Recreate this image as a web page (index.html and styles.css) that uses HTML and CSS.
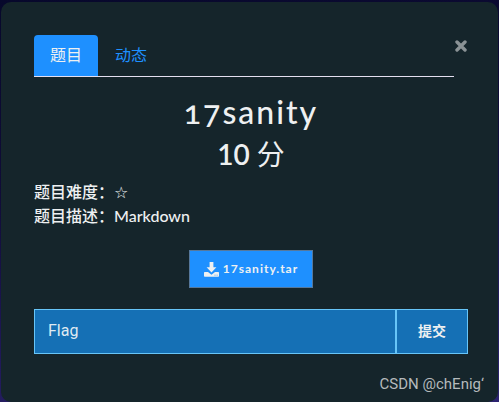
FILE: index.html
```html
<!DOCTYPE html>
<html lang="zh-CN">
<head>
<meta charset="utf-8">
<meta name="viewport" content="width=device-width, initial-scale=1">
<title>17sanity</title>
<link rel="stylesheet" href="styles.css">
</head>
<body>
<main class="modal">
  <header class="modal-head">
    <nav class="tabs">
      <a class="tab active" href="#challenge">题目</a>
      <a class="tab" href="#activity">动态</a>
    </nav>
    <button class="close" type="button" aria-label="关闭">
      <svg viewBox="0 0 12 12" width="12" height="12"><path d="M2 2L10 10M10 2L2 10" fill="none" stroke="currentColor" stroke-width="3.4" stroke-linecap="round"/></svg>
    </button>
  </header>
  <section id="challenge">
    <h2 class="name">17sanity</h2>
    <h3 class="points"><span class="value">10</span> 分</h3>
    <p class="desc">题目难度：<span class="stars">☆</span><br>题目描述：Markdown</p>
    <div class="files">
      <a class="file" href="#file">
        <svg viewBox="0 0 15 15" width="15" height="15" aria-hidden="true"><path fill="currentColor" d="M5.600 0h3.800v5.300h3L7.500 10.500 2.600 5.300h3zM.7 10H4l3.500 2.800L11 10h3.300q.7 0 .7.700v3.300q0 .7-.7.700H.7Q0 14.700 0 14v-3.300Q0 10 .7 10z"/><path fill="#1e90ff" d="M10.500 12.800h1v.8h-1zM12.600 12.800h1v.8h-1z"/></svg>
        <span>17sanity.tar</span>
      </a>
    </div>
    <form class="submit">
      <input class="flag" type="text" placeholder="Flag" aria-label="Flag">
      <button class="send" type="button">提交</button>
    </form>
  </section>
  <footer class="credit">CSDN @chEnig‘</footer>
</main>
</body>
</html>
```
FILE: styles.css
```css
* {
  box-sizing: border-box;
}

body {
  margin: 0;
  padding: 2px 1px 0;
  min-height: 100vh;
  display: flex;
  background: linear-gradient(170deg, #07082c, #100c38 40%, #2c2370);
  color: #eef0f1;
  font: 16px/24px Lato, "Noto Sans CJK SC", sans-serif;
}

.modal {
  flex: 1;
  padding: 33px 30px 0 33px;
  background: #15252b;
  border-radius: 10px;
}

.modal-head {
  display: flex;
}

.tabs {
  flex: 1;
  display: flex;
  gap: 1px;
  border-bottom: 1px solid #e4dff0;
}

.tab {
  padding: 8px 16px 9px;
  border-radius: 4px 4px 0 0;
  color: #1e90ff;
  text-decoration: none;
}

.active {
  background: #1e90ff;
  color: #eef0f1;
}

.close {
  align-self: flex-start;
  display: flex;
  margin: 0;
  padding: 5px 1px;
  border: 0;
  background: none;
  color: #8a9295;
}

.name,
.points {
  margin: 0;
  text-align: center;
}

.name {
  margin-top: 14px;
  font-size: 32px;
  line-height: 42px;
  font-weight: 500;
  font-variant-numeric: oldstyle-nums;
  letter-spacing: 2px;
}

.points {
  font-size: 28px;
  line-height: 42px;
  font-weight: 400;
}

.value {
  font-weight: 600;
}

.desc {
  margin: 5px 0 22px;
  font-weight: 500;
}

.stars {
  font-family: "DejaVu Sans", sans-serif;
  line-height: 16px;
}

.files {
  display: flex;
  justify-content: center;
}

.file {
  display: flex;
  align-items: center;
  gap: 4px;
  height: 38px;
  padding: 0 14px;
  border: 1px solid #56789b;
  background: #1e90ff;
  color: #eef0f1;
  font-size: 12px;
  font-weight: 700;
  letter-spacing: 1px;
  text-decoration: none;
}

.submit {
  display: flex;
  margin-top: 21px;
}

.flag,
.send {
  height: 45px;
  margin: 0;
  border: 1px solid #67c5f8;
  border-radius: 0;
  background: #1570b5;
  color: #eef0f1;
}

.flag {
  flex: 1;
  min-width: 0;
  padding: 0 13px 2px;
  font: 16px Roboto, sans-serif;
}

.flag::placeholder {
  color: #dfeaf2;
  opacity: 1;
}

.send {
  width: 72px;
  padding: 0 8px 4px;
  font: 700 14px "Noto Sans CJK SC", sans-serif;
}

.credit {
  margin-top: 18px;
  margin-right: -16px;
  text-align: right;
  color: #b5babc;
  font: 15px/24px Roboto, sans-serif;
}
```
